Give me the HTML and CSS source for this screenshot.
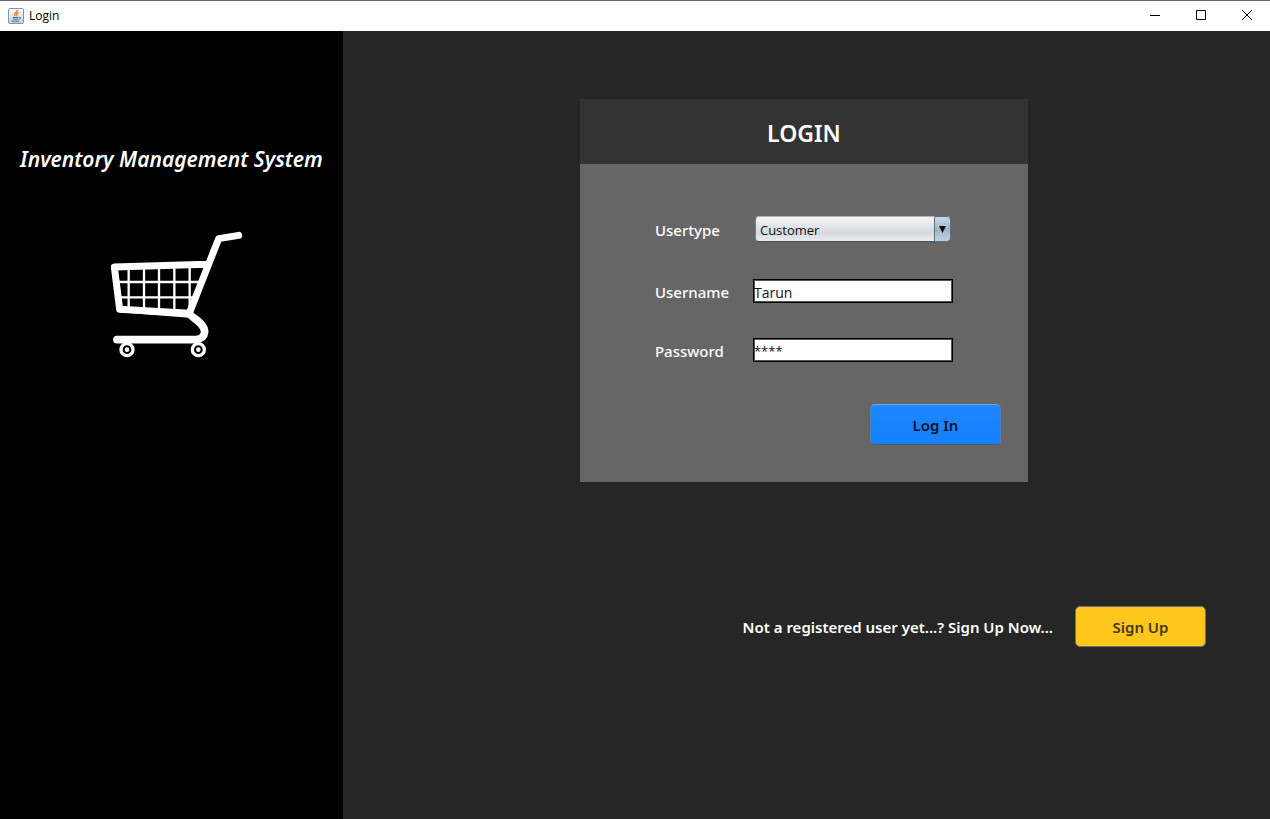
FILE: index.html
```html
<!DOCTYPE html>
<html lang="en">
<head>
<meta charset="utf-8">
<title>Login</title>
<link rel="stylesheet" href="styles.css">
</head>
<body>
<header class="titlebar">
  <svg class="app-icon" viewBox="0 0 16 16" aria-hidden="true">
    <defs><linearGradient id="tile" x1="0" y1="0" x2="0" y2="1"><stop offset="0" stop-color="#fbfcfd"/><stop offset="1" stop-color="#c4d3e0"/></linearGradient></defs>
    <rect x=".5" y=".5" width="15" height="15" rx="1" fill="url(#tile)" stroke="#8094a8"/>
    <path d="M9.500 2c.3 2-4.500 3-2.500 6M10.500 4.500c-2.500 1-2.300 2-1.300 3.500" fill="none" stroke="#e8862a" stroke-width="1.400"/>
    <path d="M4.500 9.500h6M5 11.200h5M3.500 13.200h7.500M11 9.200c2.500-.3 2 2-.5 2.300" fill="none" stroke="#4c6f8d" stroke-width="1"/>
  </svg>
  <span class="titlebar-text">Login</span>
  <div class="window-controls">
    <button class="window-button" type="button" aria-label="Minimize"><svg viewBox="0 0 12 12"><path d="M1 6.500h10"/></svg></button>
    <button class="window-button" type="button" aria-label="Maximize"><svg viewBox="0 0 12 12"><path d="M1.500 1.500h9v9h-9z"/></svg></button>
    <button class="window-button" type="button" aria-label="Close"><svg viewBox="0 0 12 12"><path d="M1 1l10 10M11 1L1 11"/></svg></button>
  </div>
</header>
<div class="layout">
  <aside class="sidebar">
    <h1 class="brand">Inventory Management System</h1>
    <svg class="cart" viewBox="33 33 396 381" role="img" aria-label="Shopping cart">
      <g fill="none" stroke="#fff" stroke-linecap="round" stroke-linejoin="round">
        <path d="M416 46L356 56L268 280L59 268L43 141L320 133" stroke-width="21"/>
        <path d="M268 282C283 298 314 311 314 336Q312 357 286 359L51 359" stroke-width="23"/>
        <path d="M50 186H300M55 232H284" stroke-width="7"/>
        <path d="M86 142V268M132 141V270M177 140V274M223 138V276M269 136V258" stroke-width="7"/>
        <path d="M59 268L268 284" stroke-width="18"/>
      </g>
      <g fill="#000" stroke="#fff">
        <circle cx="81" cy="389" r="18" stroke-width="10"/><circle cx="295" cy="389" r="18" stroke-width="10"/>
        <circle cx="81" cy="389" r="7" fill="#fff" stroke="none"/><circle cx="295" cy="389" r="7" fill="#fff" stroke="none"/>
      </g>
    </svg>
  </aside>
  <main class="content">
    <form class="card">
      <h2 class="card-title">LOGIN</h2>
      <div class="card-body">
        <div class="fields">
          <label for="usertype">Usertype</label>
          <div class="combo">
            <select id="usertype"><option>Customer</option><option>Admin</option></select>
            <span class="combo-arrow"><svg viewBox="0 0 8 8" aria-hidden="true"><path d="M0 0h8L4 8z"/></svg></span>
          </div>
          <label for="username">Username</label>
          <input class="field" id="username" type="text" value="Tarun">
          <label for="password">Password</label>
          <input class="field field-masked" id="password" type="text" value="****" autocomplete="off">
        </div>
        <button class="button button-primary" type="button">Log In</button>
      </div>
    </form>
    <div class="signup">
      <span>Not a registered user yet...? Sign Up Now...</span>
      <button class="button button-signup" type="button">Sign Up</button>
    </div>
  </main>
</div>
</body>
</html>
```
FILE: styles.css
```css
* { box-sizing: border-box; }

body {
  margin: 0;
  min-height: 100vh;
  display: flex;
  flex-direction: column;
  background: #262626;
  color: #fff;
  font: 600 15px/20px "Segoe UI", "Noto Sans", sans-serif;
}

button, input, select { font: inherit; }

.titlebar {
  display: flex;
  align-items: center;
  height: 31px;
  padding-left: 8px;
  border-top: 1px solid #666;
  background: #fff;
  color: #000;
}
.app-icon { width: 16px; height: 16px; margin-right: 5px; }
.titlebar-text { font-family: "Segoe UI", "Open Sans", sans-serif; font-size: 12px; font-weight: 400; }
.window-controls { display: flex; margin-left: auto; }
.window-button {
  width: 46px;
  height: 30px;
  padding: 0 0 2px;
  border: 0;
  background: none;
  display: grid;
  place-items: center;
}
.window-button svg { width: 12px; height: 12px; fill: none; stroke: #000; }

.layout { flex: 1; display: flex; }

.sidebar {
  flex: 0 0 27%;
  display: flex;
  flex-direction: column;
  align-items: center;
  padding: 114px 0 0;
  background: #000;
}
.brand {
  margin: 0 0 58px;
  font: italic 600 21px/28px "Segoe Print", "Noto Sans", sans-serif;
  white-space: nowrap;
}
.cart { width: 132px; height: 127px; margin-left: 12px; }

.content {
  flex: 1;
  display: flex;
  flex-direction: column;
  align-items: center;
  padding: 68px 64px 64px 59px;
}

.card { width: 448px; }
.card-title {
  margin: 0;
  padding: 18px 0 15px;
  background: #333;
  font-size: 23px;
  line-height: 32px;
  font-weight: 600;
  text-align: center;
}
.card-body {
  display: flex;
  flex-direction: column;
  padding: 50px 27px 37px 75px;
  background: #666;
}
.fields {
  display: grid;
  grid-template-columns: 98px 200px;
  grid-template-rows: 30px 24px 24px;
  row-gap: 35px;
  align-items: center;
}
.fields label { padding-top: 1px; font-weight: 500; }
.combo {
  position: relative;
  height: 26px;
  margin: 0 2px;
}
.combo select {
  width: 100%;
  height: 100%;
  padding: 1px 20px 0 4px;
  appearance: none;
  border: 1px solid;
  border-color: #b0b3b8 #777d84 #4a5158;
  border-radius: 4px;
  background: linear-gradient(#f4f5f8, #d5d9de 65%, #e9ecef);
  color: #111;
  font-family: "Segoe UI", "Open Sans", sans-serif;
  font-size: 13px;
  font-weight: 400;
}
.combo-arrow {
  position: absolute;
  inset: 0 0 0 auto;
  width: 17px;
  display: grid;
  place-items: center;
  border: 1px solid #5c7080;
  border-radius: 0 4px 4px 0;
  background: linear-gradient(#c9d8e4, #9fb6c8 55%, #b9d2e4);
  pointer-events: none;
}
.combo-arrow svg { width: 7px; height: 7px; fill: #111; }

.field {
  width: 100%;
  height: 24px;
  padding: 2px 0 0;
  border: 1px solid #000;
  border-radius: 0;
  outline: 0;
  background: #fff;
  box-shadow: inset 0 0 0 1px #555;
  color: #111;
  font-family: "Segoe UI", "Open Sans", sans-serif;
  font-size: 14px;
  font-weight: 400;
}
.field-masked { font-size: 13px; }

.button {
  width: 131px;
  height: 41px;
  padding: 0;
  border: 1px solid #6b7078;
  border-radius: 5px;
}
.button-primary {
  align-self: flex-end;
  margin-top: 42px;
  border-color: #6ea5df #4e82ba #4b5c70;
  background: linear-gradient(#1e88ff, #1480ff);
  color: #071225;
}
.button-signup { background: #ffc61c; color: #44391c; }

.signup {
  display: flex;
  align-items: center;
  align-self: flex-end;
  gap: 22px;
  margin-top: 124px;
}
```
